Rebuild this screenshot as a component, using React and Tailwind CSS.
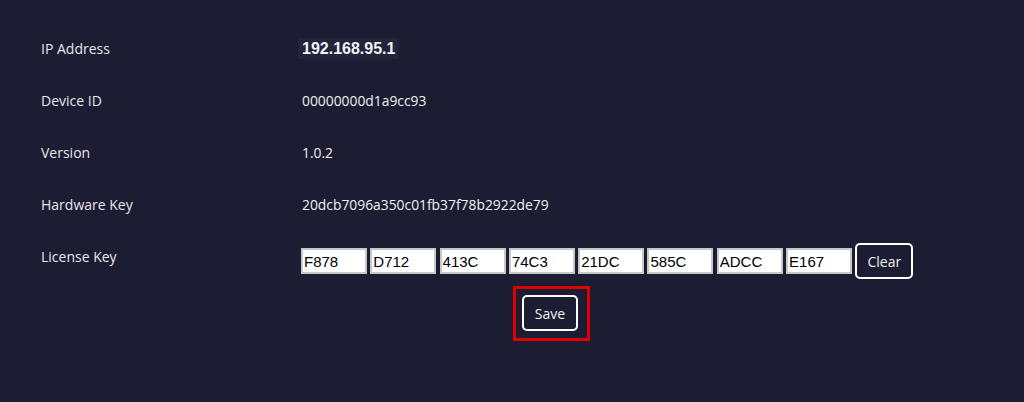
import { useState } from "react";

const ROWS = [
  { label: "IP Address", value: "192.168.95.1", ip: true },
  { label: "Device ID", value: "00000000d1a9cc93" },
  { label: "Version", value: "1.0.2" },
  { label: "Hardware Key", value: "20dcb7096a350c01fb37f78b2922de79" },
];

const INITIAL_KEY = ["F878", "D712", "413C", "74C3", "21DC", "585C", "ADCC", "E167"];

export default function App() {
  const [keyParts, setKeyParts] = useState(INITIAL_KEY);

  const handlePart = (i) => (e) => {
    const val = e.target.value.toUpperCase().slice(0, 4);
    setKeyParts((prev) => prev.map((p, idx) => (idx === i ? val : p)));
  };

  return (
    <div
      className="w-[1024px] h-[402px] bg-[#1c1c33] text-[#e6e6ea] pt-[38px] pl-[41px]"
      style={{ fontFamily: '"Open Sans", "Noto Sans", sans-serif' }}
    >
      {ROWS.map((row) => (
        <div key={row.label} className="flex items-start h-[52px]">
          <div className="w-[261px] text-[14px] leading-[21px]">{row.label}</div>
          {row.ip ? (
            <div
              className="-ml-[4px] px-[4px] bg-[#23233b] text-[16px] leading-[21px] font-bold text-[#f2f2f2]"
              style={{ fontFamily: '"Liberation Sans", Arial, sans-serif' }}
            >
              {row.value}
            </div>
          ) : (
            <div className="text-[13.85px] leading-[21px] text-[#f0f0f0]">{row.value}</div>
          )}
        </div>
      ))}

      {/* License key */}
      <div className="flex items-start">
        <div className="w-[260px] text-[14px] leading-[21px]">License Key</div>
        <div className="flex items-center gap-[3.3px] -mt-[3px]">
          {keyParts.map((part, i) => (
            <input
              key={i}
              value={part}
              onChange={handlePart(i)}
              className="w-[66px] h-[26px] bg-white text-black border-2 border-[#c8c8c8] px-[1px] text-[15px] outline-none"
              style={{ fontFamily: '"Liberation Sans", Arial, sans-serif' }}
            />
          ))}
          <button
            onClick={() => setKeyParts(Array(8).fill(""))}
            className="w-[58px] h-[36px] border-2 border-white rounded-[5px] text-[14px] text-[#f0f0f0]"
          >
            Clear
          </button>
        </div>
      </div>

      {/* Save, highlighted */}
      <div className="flex pl-[472px] mt-[7px]">
        <div className="border-[3px] border-[#e00000] pl-[6px] pr-[9px] pt-[6px] pb-[7px]">
          <button className="w-[56px] h-[36px] border-2 border-white rounded-[5px] text-[14px] text-[#f0f0f0]">
            Save
          </button>
        </div>
      </div>
    </div>
  );
}
